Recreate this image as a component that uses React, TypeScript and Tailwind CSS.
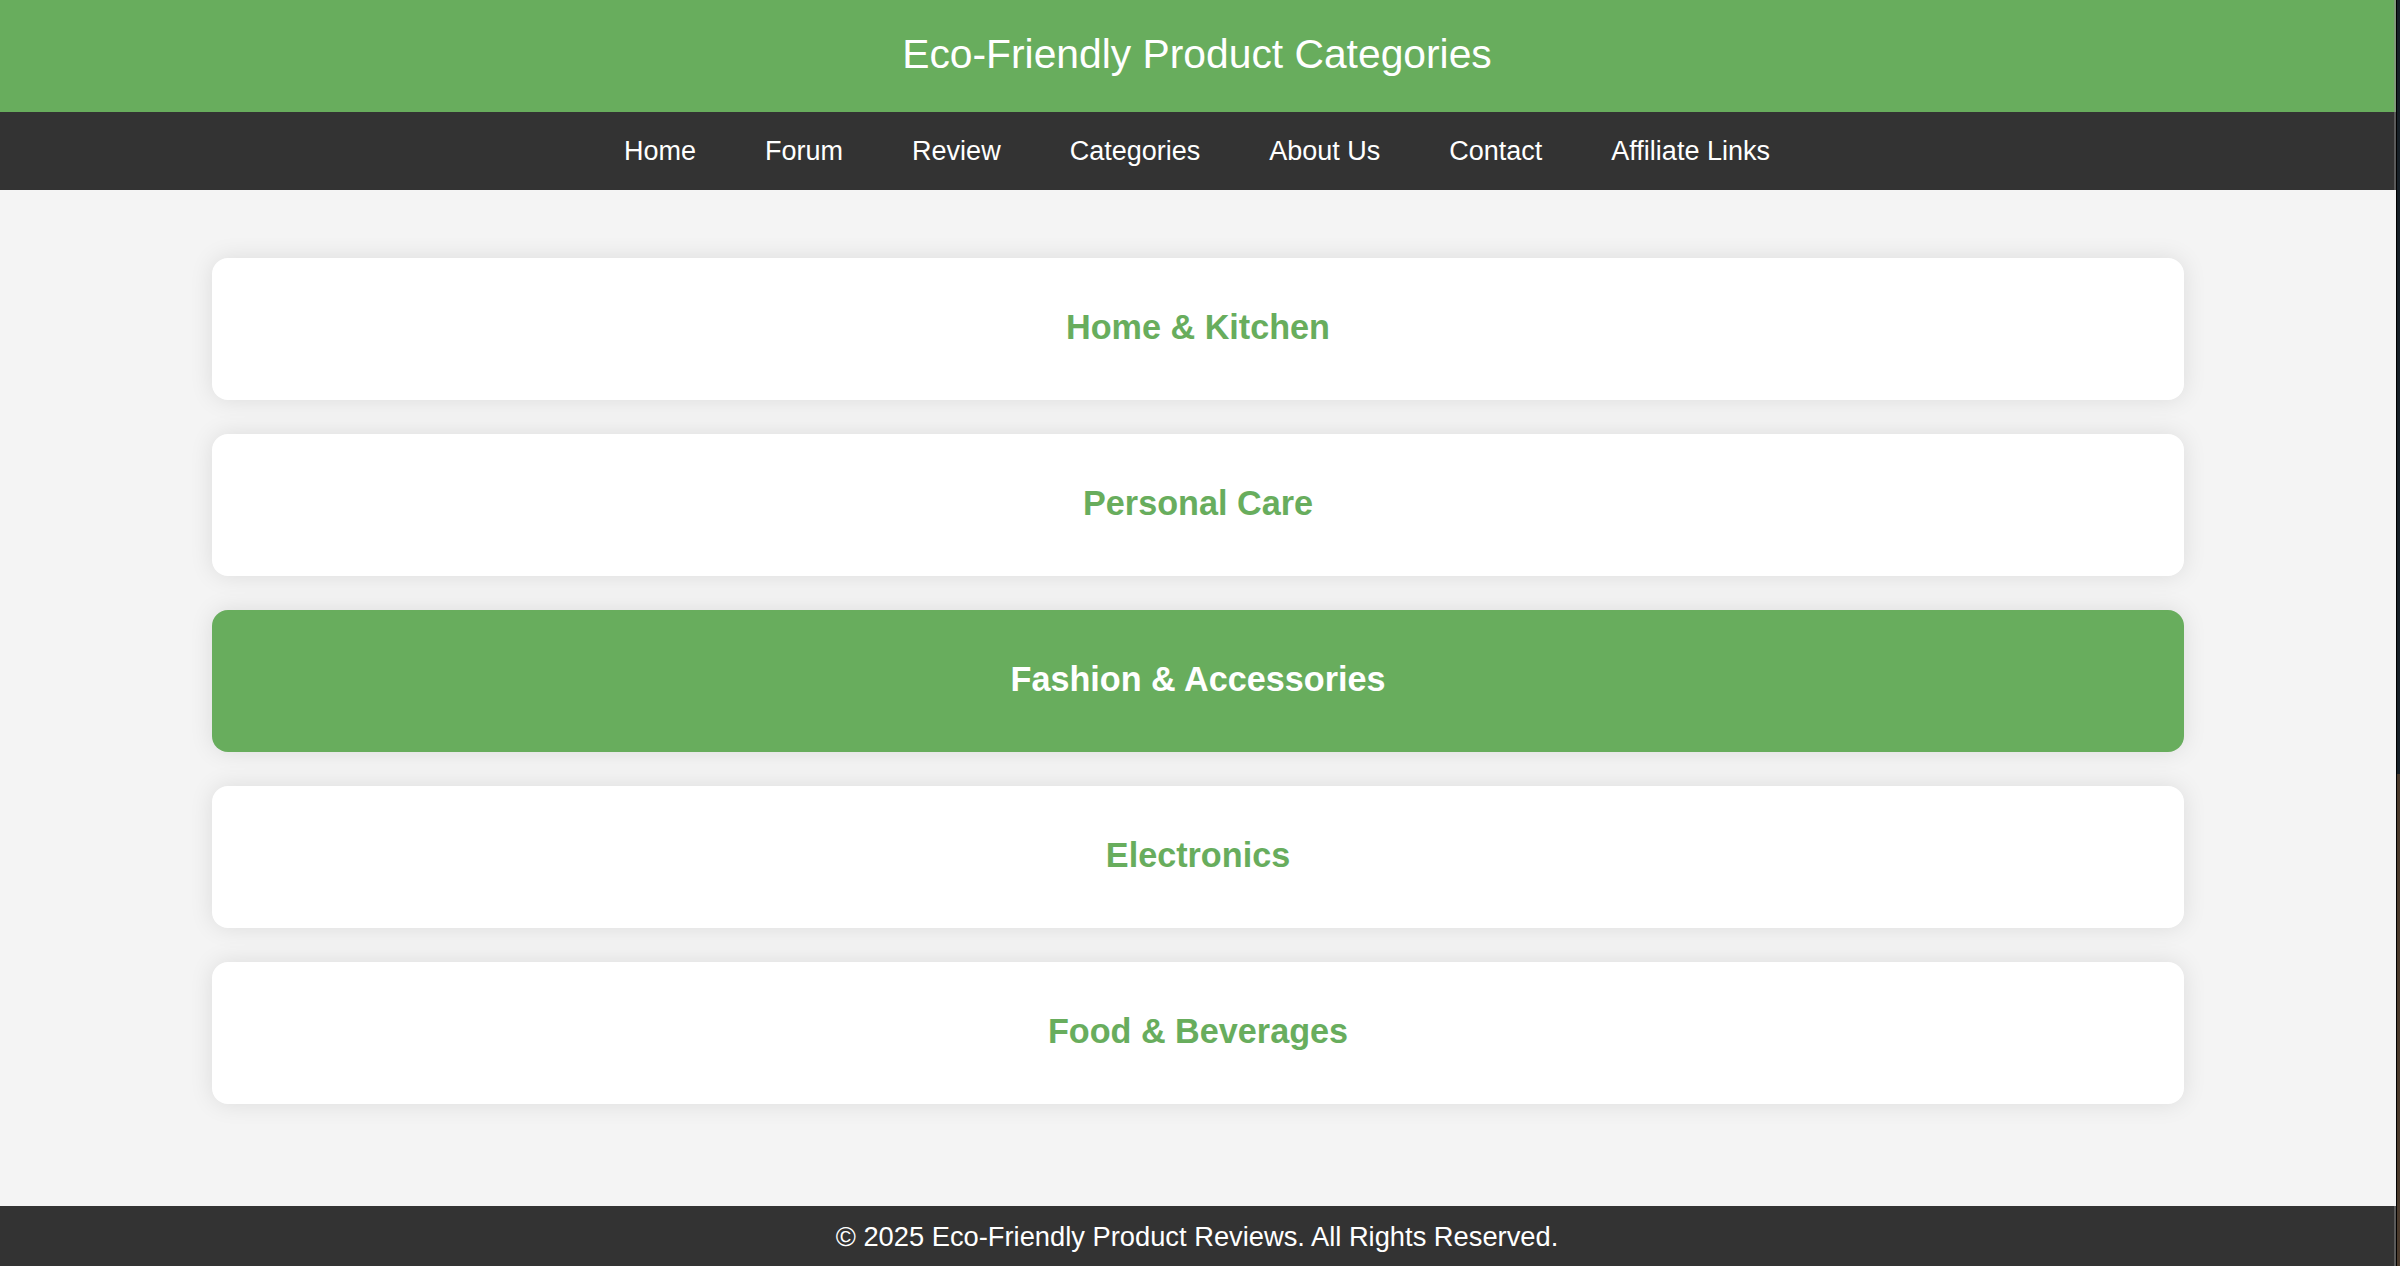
import React from "react";

const links = ["Home", "Forum", "Review", "Categories", "About Us", "Contact", "Affiliate Links"];
const categories = [
  { name: "Home & Kitchen", active: false },
  { name: "Personal Care", active: false },
  { name: "Fashion & Accessories", active: true },
  { name: "Electronics", active: false },
  { name: "Food & Beverages", active: false },
];

export default function App() {
  return (
    <div className="flex w-[2400px] h-[1266px] overflow-hidden" style={{ fontFamily: '"Liberation Sans", Arial, Helvetica, sans-serif' }}>
      <div className="flex flex-col w-[2396px] h-full bg-[#f4f4f4]">
        <header className="h-[112px] bg-[#68ad5d] flex items-center justify-center border-r-2 border-[#7f9a7a]">
          <h1 className="text-white text-[40.8px] font-normal leading-none pb-[4px]">Eco-Friendly Product Categories</h1>
        </header>
        <nav className="h-[78px] bg-[#333333] flex items-center justify-center gap-[69px] border-r-2 border-[#5a5a5a]">
          {links.map((l) => (
            <a key={l} href="#" className="text-white text-[27px] leading-none">
              {l}
            </a>
          ))}
        </nav>
        <main className="flex-1 flex flex-col gap-[34px] pt-[68px] px-[212px]">
          {categories.map((c) => (
            <div
              key={c.name}
              className={
                c.active
                  ? "h-[142px] rounded-[16px] bg-[#68ad5d] flex items-center justify-center shadow-[0_0_23px_rgba(0,0,0,0.1)]"
                  : "h-[142px] rounded-[16px] bg-white flex items-center justify-center shadow-[0_0_23px_rgba(0,0,0,0.1)]"
              }
            >
              <h2 className={c.active ? "text-white text-[34.2px] font-bold leading-none pb-[3px]" : "text-[#68ad5d] text-[34.2px] font-bold leading-none pb-[3px]"}>
                {c.name}
              </h2>
            </div>
          ))}
        </main>
        <footer className="h-[60px] bg-[#333333] flex items-center justify-center border-r-2 border-[#5a5a5a]">
          <p className="text-white text-[27.3px] leading-none pt-[2px]">© 2025 Eco-Friendly Product Reviews. All Rights Reserved.</p>
        </footer>
      </div>
      <div className="w-[4px] h-full flex">
        <div className="w-[1px] h-full bg-black" />
        <div className="flex-1 h-full flex flex-col">
          <div className="h-[774px] bg-[#172027]" />
          <div className="flex-1 bg-[#4a3a2c]" />
        </div>
      </div>
    </div>
  );
}
